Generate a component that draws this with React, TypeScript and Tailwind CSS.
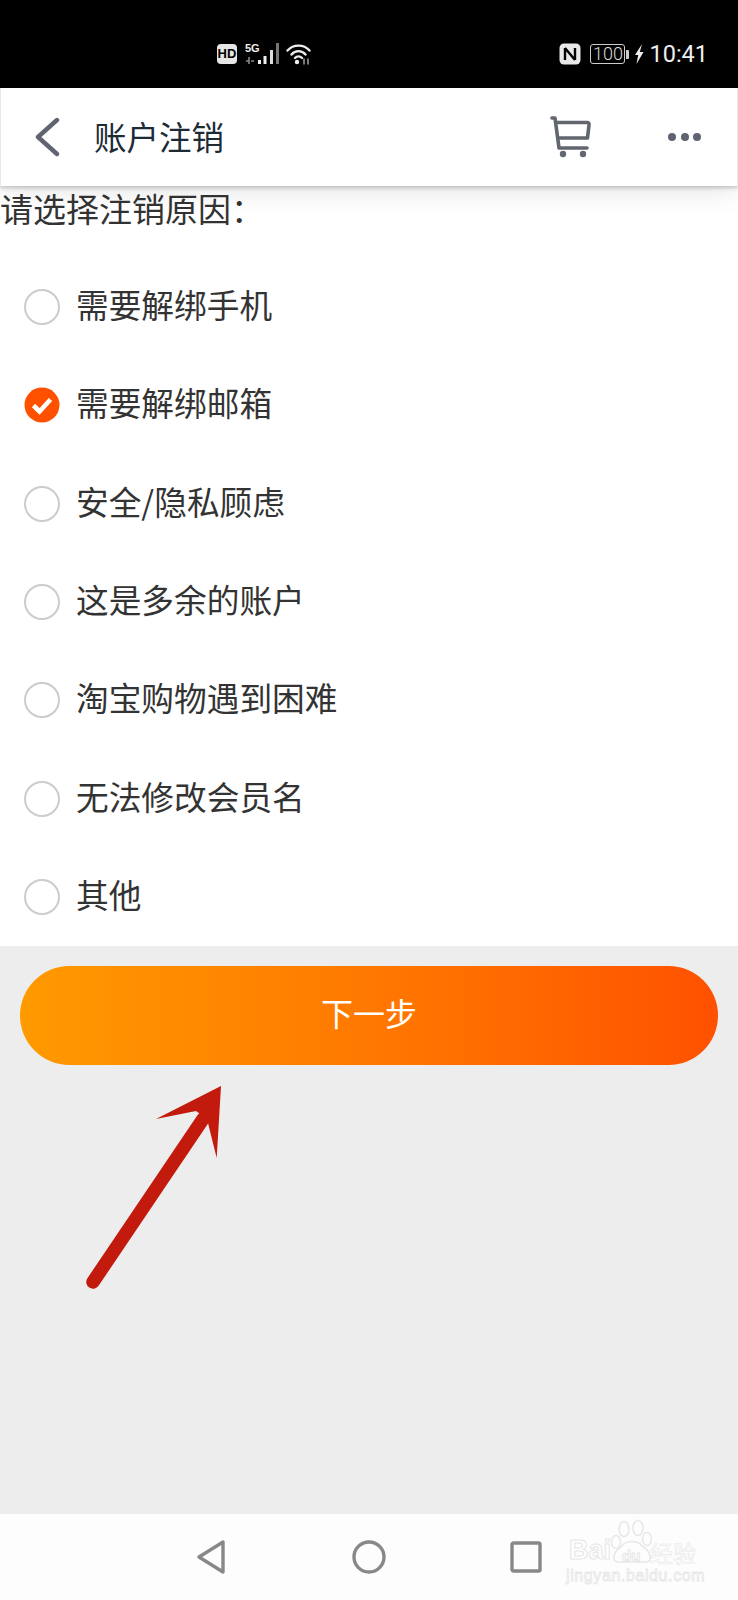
const font = "font-['Noto_Sans_CJK_SC',sans-serif]";
const options = ["需要解绑手机", "需要解绑邮箱", "安全/隐私顾虑", "这是多余的账户", "淘宝购物遇到困难", "无法修改会员名", "其他"];

function Status() {
  return (
    <div className="h-[88px] shrink-0 bg-black flex items-center justify-between pl-[217px] pr-[30px] pt-[20px] text-white">
      <div className="flex items-center">
        <div className="w-[20px] h-[20px] rounded-[4px] bg-[#e6e6e6] text-black text-[13px] font-bold leading-[20px] text-center font-['Liberation_Sans',sans-serif]">HD</div>
        <svg width="36" height="22" viewBox="0 0 36 22" fill="none" className="ml-[8px]">
          <text x="0" y="9" fontSize="11" fontWeight="700" fill="#eee" fontFamily="Liberation Sans">5G</text>
          <rect x="13" y="17" width="3" height="4" fill="#eee" />
          <rect x="18.5" y="13" width="3" height="8" fill="#eee" />
          <rect x="25" y="7" width="3" height="14" fill="#ddd" />
          <rect x="31" y="0" width="3" height="21" fill="#777" />
          <path d="M4 14v7M1 18h3M6 18h3" stroke="#888" strokeWidth="1.6" />
        </svg>
        <svg width="26" height="22" viewBox="0 0 26 22" fill="none" stroke="#eee" strokeWidth="2.4" strokeLinecap="round" className="ml-[5px]">
          <path d="M1.5 7.5C7.5 1 17.5 1 23.5 7.5" />
          <path d="M5.5 11.5C9.5 7 15.5 7 19.5 11.5" />
          <path d="M9 15C11 13 14 13 16 15" />
          <circle cx="11" cy="19" r="2.2" fill="#eee" stroke="none" />
          <path d="M18 16v5M22 16v5" strokeWidth="1.4" stroke="#aaa" />
        </svg>
      </div>
      <div className="flex items-center">
        <svg width="22" height="22" viewBox="0 0 22 22" className="mr-[9px]">
          <rect x="0.5" y="0.5" width="21" height="21" rx="4.5" fill="#e8e8e8" />
          <path d="M6 5v12M6 5l10 12M16 5v12" stroke="#000" strokeWidth="2.4" fill="none" />
        </svg>
        <div className="w-[35px] h-[20px] border border-[#ccc] rounded-[3px] text-[18px] leading-[18px] text-center text-[#ddd] font-['Roboto',sans-serif] font-light">100</div>
        <div className="w-[3px] h-[9px] bg-[#ccc] ml-[1px] rounded-r-[1px]"></div>
        <svg width="10" height="20" viewBox="0 0 10 20" className="ml-[5px] mr-[5px]">
          <path d="M8 0L1 11h3.2L2.5 20 9.5 8H5.8z" fill="#eee" />
        </svg>
        <div className="text-[23.5px] leading-[28px] font-['Roboto',sans-serif] text-[#eee]">10:41</div>
      </div>
    </div>
  );
}

function Header() {
  return (
    <div className="h-[98px] shrink-0 relative z-10 bg-white border-x border-[#e8e8e8] flex items-center shadow-[0_2px_4px_rgba(0,0,0,0.2),0_6px_24px_rgba(0,0,0,0.1)]">
      <svg width="26" height="40" viewBox="0 0 26 40" className="ml-[34px]" fill="none" stroke="#5f6470" strokeWidth="4.4" strokeLinecap="round" strokeLinejoin="round">
        <path d="M22 3L3 20l19 17" />
      </svg>
      <div className={`${font} ml-[33px] mb-[2px] text-[32.5px] leading-[44px] text-[#1d2b36] flex-1`}>账户注销</div>
      <svg width="44" height="44" viewBox="0 0 44 44" fill="none" stroke="#62666e" strokeWidth="3.6" strokeLinecap="round" strokeLinejoin="round">
        <path d="M4 3H7L11 33H39" />
        <path d="M9 7.5H39Q41.5 7.5 41 10L39.5 23H11" />
        <circle cx="15" cy="39" r="3.2" fill="#62666e" stroke="none" />
        <circle cx="35" cy="39" r="3.2" fill="#62666e" stroke="none" />
      </svg>
      <div className="ml-[76px] mr-[36px] flex gap-[4.5px]">
        <span className="w-[8px] h-[8px] rounded-full bg-[#5f6470]"></span>
        <span className="w-[8px] h-[8px] rounded-full bg-[#5f6470]"></span>
        <span className="w-[8px] h-[8px] rounded-full bg-[#5f6470]"></span>
      </div>
    </div>
  );
}

function Row({ label, on }: { label: string; on: boolean }) {
  return (
    <div className="h-[98.3px] flex items-center pl-[24px]">
      {on ? (
        <svg width="36" height="36" viewBox="0 0 36 36">
          <circle cx="18" cy="18" r="17.5" fill="#ff5000" />
          <path d="M9.5 18.5l6 6L26.5 12.5" fill="none" stroke="#fff" strokeWidth="4.6" />
        </svg>
      ) : (
        <div className="w-[36px] h-[36px] rounded-full border-2 border-[#cccccc] bg-white"></div>
      )}
      <div className={`${font} ml-[16px] mb-[6px] text-[32.7px] leading-[44px] text-[#333]`}>{label}</div>
    </div>
  );
}

function Nav() {
  const stroke = "[-webkit-text-stroke:1px_#e6e6e6]";
  return (
    <div className="h-[86px] shrink-0 bg-[#fdfdfd] relative flex items-center">
      <svg width="32" height="36" viewBox="0 0 32 36" className="ml-[195px]" fill="none" stroke="#888" strokeWidth="3.4" strokeLinejoin="round">
        <path d="M28 3V33L4 18Z" />
      </svg>
      <svg width="34" height="34" viewBox="0 0 34 34" className="ml-[125px]" fill="none" stroke="#888" strokeWidth="3.4">
        <circle cx="17" cy="17" r="15" />
      </svg>
      <svg width="32" height="32" viewBox="0 0 32 32" className="ml-[124px]" fill="none" stroke="#888" strokeWidth="3.4" strokeLinejoin="round">
        <rect x="2" y="2" width="28" height="28" rx="1.5" />
      </svg>
      <svg width="136" height="56" viewBox="0 0 136 56" fill="none" stroke="#e8e8e8" strokeWidth="1.6" className="absolute left-[566px] top-[2px]">
        <path d="M52 46C45 46 47 35 56 30C60 24 72 24 76 30C85 35 87 46 80 46C74 46 58 46 52 46Z" />
        <ellipse cx="50" cy="26" rx="4.5" ry="6.5" />
        <ellipse cx="58" cy="13" rx="5" ry="7.5" />
        <ellipse cx="72" cy="12" rx="5" ry="7.5" />
        <ellipse cx="81" cy="23" rx="4.5" ry="6.5" />
      </svg>
      <div className={`absolute left-[569px] top-[21px] text-[27px] leading-[30px] font-bold text-white ${stroke} font-['Liberation_Sans',sans-serif]`}>Bai</div>
      <div className={`absolute left-[622px] top-[33px] text-[15px] leading-[18px] font-bold text-white ${stroke} font-['Liberation_Sans',sans-serif]`}>du</div>
      <div className={`absolute left-[650px] top-[24px] text-[23px] leading-[28px] text-white [-webkit-text-stroke:0.6px_#e8e8e8] ${font}`}>经验</div>
      <div className="absolute left-[566px] top-[53px] text-[16px] leading-[18px] text-white [-webkit-text-stroke:0.8px_#e6e6e6] font-['Liberation_Sans',sans-serif] tracking-[0.6px]">jingyan.baidu.com</div>
    </div>
  );
}

export default function App() {
  return (
    <div className="w-[738px] h-[1600px] flex flex-col bg-white overflow-hidden">
      <Status />
      <Header />
      <div className="bg-white shrink-0">
        <div className={`${font} h-[72px] text-[33px] leading-[44px] text-[#333]`}>请选择注销原因：</div>
        {options.map((o, i) => (
          <Row key={o} label={o} on={i === 1} />
        ))}
      </div>
      <div className="flex-1 bg-[#ededed] px-[20px] pt-[20px] relative">
        <div className={`${font} h-[99px] pb-[8px] rounded-full bg-gradient-to-r from-[#ff9a00] to-[#ff5000] flex items-center justify-center text-white text-[32px]`}>下一步</div>
        <svg width="140" height="210" viewBox="0 0 140 210" className="absolute left-[85px] top-[138px]">
          <path d="M8 198L118 35" stroke="#c21a0c" strokeWidth="13.5" strokeLinecap="round" />
          <path d="M136 2L71 35L111 27L122 35L131.7 74Z" fill="#c21a0c" />
        </svg>
      </div>
      <Nav />
    </div>
  );
}
